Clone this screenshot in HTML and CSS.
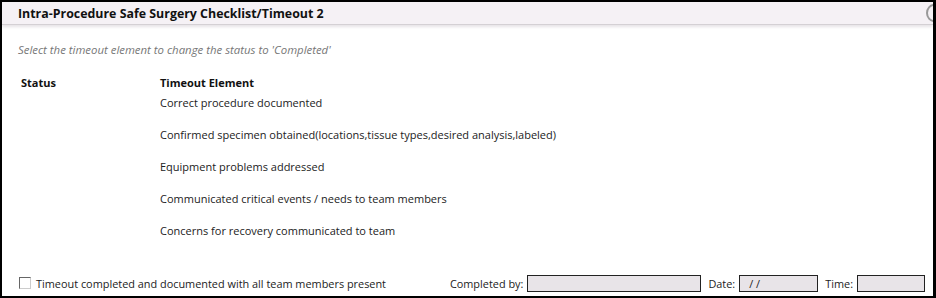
FILE: index.html
```html
<!DOCTYPE html>
<html lang="en">
<head>
  <meta charset="UTF-8">
  <title>Intra-Procedure Safe Surgery Checklist/Timeout 2</title>
  <link rel="stylesheet" href="styles.css">
</head>
<body>
  <div class="panel">
    <div class="panel-header">
      <h1>Intra-Procedure Safe Surgery Checklist/Timeout 2</h1>
      <span class="close-btn"></span>
    </div>

    <div class="panel-body">
      <p class="hint">Select the timeout element to change the status to 'Completed'</p>

      <div class="grid-head">
        <span class="col-status">Status</span>
        <span class="col-element">Timeout Element</span>
      </div>

      <ul class="elements">
        <li><span class="col-status"></span><span class="col-element">Correct procedure documented</span></li>
        <li><span class="col-status"></span><span class="col-element">Confirmed specimen obtained(locations,tissue types,desired analysis,labeled)</span></li>
        <li><span class="col-status"></span><span class="col-element">Equipment problems addressed</span></li>
        <li><span class="col-status"></span><span class="col-element">Communicated critical events / needs to team members</span></li>
        <li><span class="col-status"></span><span class="col-element">Concerns for recovery communicated to team</span></li>
      </ul>
    </div>

    <div class="panel-footer">
      <label class="confirm">
        <span class="check"></span>
        Timeout completed and documented with all team members present
      </label>
      <div class="fields">
        <label>Completed by:</label>
        <span class="field field-name"></span>
        <label>Date:</label>
        <span class="field field-date">/ /</span>
        <label>Time:</label>
        <span class="field field-time"></span>
      </div>
    </div>
  </div>
</body>
</html>
```

FILE: styles.css
```css
html, body {
  margin: 0;
  padding: 0;
  background: #000;
}
body {
  font-family: "Open Sans", "DejaVu Sans", sans-serif;
  color: #222;
  font-size: 11px;
}
.panel {
  width: 931px;
  height: 294px;
  margin: 2px 3px 2px 2px;
  background: #fff;
  display: flex;
  flex-direction: column;
  overflow: hidden;
}
.panel-header {
  height: 22px;
  background: #f5f1f5;
  border-bottom: 1px solid #d4d0d4;
  box-shadow: 0 2px 3px #e6e3e6;
  display: flex;
  align-items: center;
  justify-content: space-between;
  padding-left: 16px;
}
.panel-header h1 {
  margin: 0;
  font-size: 12.4px;
  font-weight: bold;
  color: #111;
}
.close-btn {
  width: 12px;
  height: 14px;
  border: 2px solid #999;
  border-radius: 50%;
  margin-right: -9px;
}
.panel-body {
  padding: 0 16px;
  flex: 1;
}
.hint {
  margin: 17px 0 0;
  font-style: italic;
  color: #777;
  font-size: 11.4px;
}
.grid-head {
  display: flex;
  margin-top: 18px;
  font-weight: bold;
  color: #111;
}
.col-status {
  width: 139px;
  padding-left: 3px;
}
.elements {
  list-style: none;
  margin: 0;
  padding: 0;
}
.elements li {
  display: flex;
  height: 32px;
  align-items: flex-start;
  padding-top: 6px;
  box-sizing: border-box;
}
.elements li:first-child {
  height: 31px;
  padding-top: 5px;
}
.panel-footer {
  display: flex;
  align-items: center;
  justify-content: space-between;
  padding: 0 8px 3px 17px;
  height: 20px;
  font-size: 10.9px;
}
.confirm {
  display: flex;
  align-items: center;
  gap: 5px;
}
.check {
  width: 10px;
  height: 10px;
  border: 1px solid #666;
  border-right-color: #ccc;
  border-bottom-color: #ccc;
  background: #fff;
}
.fields {
  display: flex;
  align-items: center;
  gap: 4px;
}
.fields label {
  margin-left: 3px;
}
.field {
  height: 17px;
  box-sizing: border-box;
  border: 1px solid #222;
  background: #e8e4e8;
  line-height: 15px;
}
.field-name { width: 174px; }
.field-date { width: 79px; padding-left: 9px; }
.field-time { width: 68px; }
```
